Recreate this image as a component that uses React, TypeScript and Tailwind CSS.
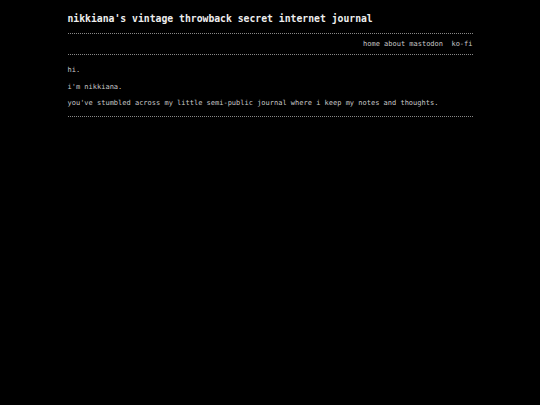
import React from "react";

const NAV = ["home", "about", "mastodon", " ko-fi"];

export default function App() {
    return (
        <div className="min-h-screen w-full bg-black text-[#c8c8c8] font-['DejaVu_Sans_Mono',monospace]">
            <div className="mx-auto w-[405px]">
                <header className="pt-[13px] pb-[8px]">
                    <h1 className="text-[9.75px] leading-[12px] font-bold text-[#eeeeee]">
                        nikkiana's vintage throwback secret internet journal
                    </h1>
                </header>

                <nav className="border-y border-dotted border-[#888888] pt-[5px] pb-[5px] flex justify-end gap-[4.2px] text-[7px] leading-[10px] whitespace-pre">
                    {NAV.map((n) => (
                        <a key={n} href="#" className="text-[#c8c8c8]">
                            {n}
                        </a>
                    ))}
                </nav>

                <main className="pt-[10px] pb-[8px] border-b border-dotted border-[#888888] text-[7px] leading-[10px] flex flex-col gap-[6.5px]">
                    <p>hi.</p>
                    <p>i'm nikkiana.</p>
                    <p>you've stumbled across my little semi-public journal where i keep my notes and thoughts.</p>
                </main>
            </div>
        </div>
    );
}
